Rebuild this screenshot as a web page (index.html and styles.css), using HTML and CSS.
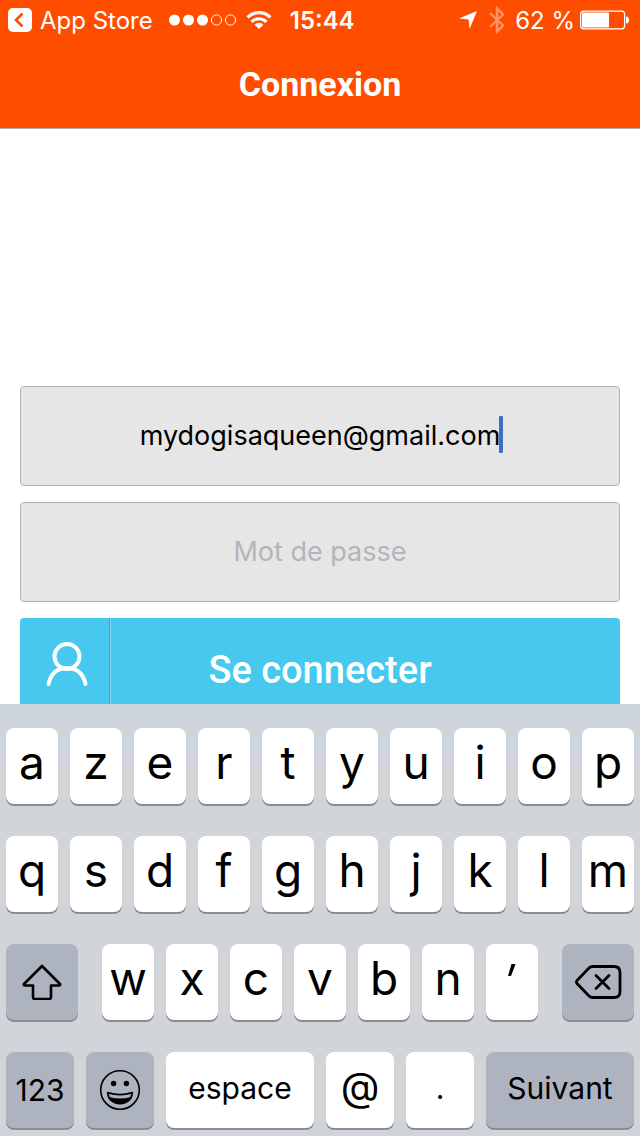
FILE: index.html
```html
<!DOCTYPE html>
<html lang="fr">
<head>
    <meta charset="UTF-8">
    <meta name="viewport" content="width=device-width, initial-scale=1.0">
    <title>Connexion</title>
    <link rel="stylesheet" href="styles.css">
</head>
<body>
    <header class="top-bar">
        <div class="status-bar">
            <a href="#" class="back-link">
                <svg width="24" height="24" viewBox="0 0 24 24">
                    <rect width="24" height="24" rx="5" fill="#fff"/>
                    <path d="M14.5 5.5 L8 12 L14.5 18.5" fill="none" stroke="#ff4d00" stroke-width="2.6"/>
                </svg>
                App Store
            </a>
            <svg class="signal" width="68" height="14" viewBox="0 0 68 14">
                <g fill="#fff">
                    <circle cx="5.5" cy="7" r="5.5"/>
                    <circle cx="19.5" cy="7" r="5.5"/>
                    <circle cx="33.5" cy="7" r="5.5"/>
                </g>
                <g fill="none" stroke="#fff">
                    <circle cx="47.5" cy="7" r="5.1"/>
                    <circle cx="61.5" cy="7" r="5.1"/>
                </g>
            </svg>
            <svg class="wifi" width="26" height="20" viewBox="0 0 26 20">
                <g fill="none" stroke="#fff" stroke-width="3.2">
                    <path d="M1.6 7.4 A16 16 0 0 1 24.4 7.4"/>
                    <path d="M5.6 11.8 A10.5 10.5 0 0 1 20.4 11.8"/>
                </g>
                <path d="M13 19 L8.6 14.7 A6.2 6.2 0 0 1 17.4 14.7 Z" fill="#fff"/>
            </svg>
            <span class="time">15:44</span>
            <div class="status-right">
                <svg width="18" height="18" viewBox="0 0 18 18">
                    <path d="M18 0 L10.6 18 L9.6 8.6 L0 7.6 Z" fill="#fff"/>
                </svg>
                <svg class="bluetooth" width="16" height="28" viewBox="0 0 16 28">
                    <path d="M1 7 L14 19.5 L8 25.5 V2.5 L14 8.5 L1 21" fill="none" stroke="#ff9466" stroke-width="2.4"/>
                </svg>
                <span class="percent">62 %</span>
                <svg width="50" height="20" viewBox="0 0 50 20">
                    <rect x="0.6" y="1.1" width="44" height="17.8" rx="3" fill="none" stroke="#fff" stroke-width="1.2"/>
                    <rect x="2" y="2.5" width="27" height="15" rx="1" fill="#fff"/>
                    <path d="M46 6.5 Q49 6.5 49 10 Q49 13.5 46 13.5 Z" fill="#fff"/>
                </svg>
            </div>
        </div>
        <h1>Connexion</h1>
    </header>

    <main class="content">
        <form class="login-form">
            <div class="field">
                <input type="text" inputmode="email" aria-label="Adresse e-mail" value="mydogisaqueen@gmail.com">
                <span class="caret"></span>
            </div>
            <div class="field">
                <input type="password" aria-label="Mot de passe" placeholder="Mot de passe">
            </div>
            <button type="button" class="login-btn">
                <span class="login-icon">
                    <svg width="42" height="46" viewBox="0 0 42 46">
                        <g fill="none" stroke="#fff" stroke-width="4" stroke-linecap="round">
                            <circle cx="21" cy="15.5" r="12.5"/>
                            <path d="M2.500 43 C5 32 12 27 21 27 C30 27 37 32 39.5 43"/>
                        </g>
                    </svg>
                </span>
                <span class="login-label">Se connecter</span>
            </button>
        </form>
    </main>

    <div class="keyboard">
        <div class="key-row">
            <button class="key">a</button>
            <button class="key">z</button>
            <button class="key">e</button>
            <button class="key">r</button>
            <button class="key">t</button>
            <button class="key">y</button>
            <button class="key">u</button>
            <button class="key">i</button>
            <button class="key">o</button>
            <button class="key">p</button>
        </div>
        <div class="key-row">
            <button class="key">q</button>
            <button class="key">s</button>
            <button class="key">d</button>
            <button class="key">f</button>
            <button class="key">g</button>
            <button class="key">h</button>
            <button class="key">j</button>
            <button class="key">k</button>
            <button class="key">l</button>
            <button class="key">m</button>
        </div>
        <div class="key-row row-shift">
            <button class="key key-dark" aria-label="Majuscule">
                <svg width="40" height="36" viewBox="0 0 40 36">
                    <path d="M20 2 L38 20 Q38.5 21.5 37 21.5 H29 V33 Q29 35 27 35 H13 Q11 35 11 33 V21.5 H3 Q1.5 21.5 2 20 Z" fill="none" stroke="#000" stroke-width="2.6" stroke-linejoin="round"/>
                </svg>
            </button>
            <div class="key-group">
                <button class="key">w</button>
                <button class="key">x</button>
                <button class="key">c</button>
                <button class="key">v</button>
                <button class="key">b</button>
                <button class="key">n</button>
                <button class="key" aria-label="Apostrophe">
                    <svg class="quote" width="10" height="14" viewBox="0 0 10 14">
                        <path d="M4.5 1 H8.6 L4 13 H1 Z" fill="#000"/>
                    </svg>
                </button>
            </div>
            <button class="key key-dark" aria-label="Effacer">
                <svg width="48" height="36" viewBox="0 0 48 36">
                    <g fill="none" stroke="#000" stroke-width="2.8" stroke-linecap="round" stroke-linejoin="round">
                        <path d="M18.5 2.5 H40 Q46 2.5 46 8.5 V27.5 Q46 33.5 40 33.5 H18.5 Q16.5 33.5 15 32 L3 19.5 Q1.8 18 3 16.5 L15 4 Q16.5 2.5 18.5 2.5 Z"/>
                        <path d="M22 11.5 L35 24.5 M35 11.5 L22 24.5"/>
                    </g>
                </svg>
            </button>
        </div>
        <div class="key-row row-bottom">
            <button class="key key-dark key-text key-num">123</button>
            <button class="key key-dark" aria-label="Emoji">
                <svg width="42" height="42" viewBox="0 0 42 42">
                    <circle cx="21" cy="21" r="19.3" fill="none" stroke="#000" stroke-width="1.6"/>
                    <circle cx="14.6" cy="14.5" r="2.7"/>
                    <circle cx="27.4" cy="14.5" r="2.7"/>
                    <path d="M8.8 23.6 Q21 27.6 33.2 23.6 C32.8 30.5 28 34.6 21 34.6 C14 34.6 9.2 30.5 8.8 23.6 Z" fill="#adb3bf" stroke="#000" stroke-width="1.8" stroke-linejoin="round"/>
                    <path d="M10.5 28 Q21 31 31.5 28 C29 33.2 25.5 34.8 21 34.8 C16.5 34.8 13 33.2 10.5 28 Z"/>
                </svg>
            </button>
            <button class="key key-text">espace</button>
            <button class="key key-at">@</button>
            <button class="key key-text">.</button>
            <button class="key key-dark key-text">Suivant</button>
        </div>
    </div>
</body>
</html>
```
FILE: styles.css
```css
:root {
    --primary-color: #ff4d00;
    --accent-color: #47c8ee;
    --field-color: #e6e6e6;
    --key-dark: #adb3bf;
}
* {
    box-sizing: border-box;
}
body {
    font-family: Inter, "Liberation Sans", sans-serif;
    background-color: #fff;
    color: #000;
    margin: 0;
    height: 100vh;
    display: flex;
    flex-direction: column;
}
svg {
    display: block;
    flex: none;
}
button {
    font-family: inherit;
    color: inherit;
    border: none;
    padding: 0;
    cursor: pointer;
}

/* Header */
.top-bar {
    background-color: var(--primary-color);
    color: #fff;
    border-bottom: 1px solid #b2a8a2;
}
.status-bar {
    display: flex;
    align-items: center;
    height: 40px;
    padding: 0 10px 0 8px;
    font-size: 24px;
}
.back-link {
    display: flex;
    align-items: center;
    gap: 8px;
    color: #fff;
    text-decoration: none;
}
.signal { margin-left: 16px; }
.wifi { margin-left: 9px; }
.time { margin-left: 18px; font-weight: 600; }
.status-right {
    display: flex;
    align-items: center;
    margin-left: auto;
}
.bluetooth { margin-left: 12px; }
.percent { margin: 0 5px 0 10px; }
h1 {
    margin: 0;
    font-family: Roboto, sans-serif;
    font-size: 34px;
    font-weight: 700;
    line-height: 88px;
    text-align: center;
}

/* Login form */
.content {
    flex: 1;
    min-height: 0;
    overflow: hidden;
    padding: 257px 20px 0;
}
.login-form {
    display: flex;
    flex-direction: column;
    gap: 16px;
}
.field {
    position: relative;
}
.field input {
    display: block;
    width: 100%;
    height: 100px;
    padding: 0 20px 2px;
    border: 1px solid #b3b3b3;
    border-radius: 4px;
    background-color: var(--field-color);
    font-family: inherit;
    font-size: 27px;
    text-align: center;
    outline: none;
}
.field input::placeholder {
    color: #b4b4ba;
}
.caret {
    position: absolute;
    top: 30px;
    left: calc(50% + 179px);
    width: 4px;
    height: 37px;
    border-radius: 1px;
    background-color: #3f6fc4;
}
.login-btn {
    display: flex;
    height: 100px;
    border-radius: 4px;
    background-color: var(--accent-color);
    color: #fff;
}
.login-icon {
    display: flex;
    align-items: center;
    justify-content: center;
    width: 91px;
    height: 100%;
    padding: 0 0 8px 4px;
    border-right: 1px solid #84d4f0;
    box-shadow: inset -1px 0 #3ba7cc;
}
.login-label {
    flex: 1;
    padding-right: 91px;
    font-family: Roboto, sans-serif;
    font-size: 38px;
    font-weight: 500;
    line-height: 104px;
}

/* Keyboard */
.keyboard {
    display: flex;
    flex-direction: column;
    gap: 32px;
    padding: 24px 6px 8px;
    background: linear-gradient(#cdd5dd, #d1d5da 80px);
}
.key-row, .key-group {
    display: flex;
    gap: 12px;
}
.key {
    display: flex;
    align-items: center;
    justify-content: center;
    flex: 1 1 0;
    min-width: 0;
    height: 76px;
    padding-bottom: 8px;
    border-radius: 8px;
    background-color: #fff;
    box-shadow: 0 2px #898c90;
    font-size: 46px;
    font-weight: 400;
}
.key-dark {
    background-color: var(--key-dark);
    padding-bottom: 0;
}
.key-text {
    font-size: 30px;
    padding-bottom: 4px;
}
.key-num { padding-bottom: 0; }
.key-at { font-size: 40px; }
.quote { margin-bottom: 16px; }
.row-shift {
    display: grid;
    grid-template-columns: 72fr 436fr 72fr;
    gap: 24px;
}
.row-bottom {
    display: grid;
    grid-template-columns: 68fr 68fr 148fr 68fr 68fr 148fr;
}
```
